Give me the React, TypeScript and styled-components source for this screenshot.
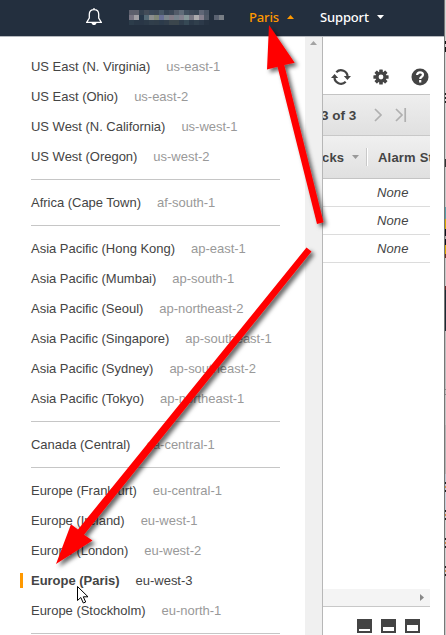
import React from 'react';
import styled, { createGlobalStyle } from 'styled-components';

const Global = createGlobalStyle`
  * { box-sizing: border-box; }
  body { margin: 0; background: #fff; font-family: "Liberation Sans", Arial, sans-serif; color: #444; overflow: hidden; }
`;

const Screen = styled.div`
  position: relative;
  display: flex;
  width: 446px;
  height: 635px;
  overflow: hidden;
`;
const Page = styled.div`
  width: 444px;
  height: 635px;
  display: flex;
  flex-direction: column;
`;
const TopBar = styled.header`
  flex: none;
  height: 37px;
  display: flex;
  align-items: flex-start;
  background: #232f3e;
  border-bottom: 1px solid #b5b9be;
  padding-left: 86px;
`;
const Bell = styled.svg`
  width: 16px;
  height: 18px;
  margin-top: 8px;
`;
const Account = styled.div`
  display: grid;
  grid-template-columns: repeat(19, 5px);
  grid-auto-rows: 5px;
  margin: 10px 0 0 27px;
`;
const Block = styled.i<{ $c: string }>`
  background: ${p => p.$c};
`;
const NavItem = styled.div<{ $active?: boolean; $w: number }>`
  display: flex;
  align-items: center;
  justify-content: space-between;
  width: ${p => p.$w}px;
  height: 34px;
  margin-left: ${p => (p.$active ? 25 : 26)}px;
  font: 500 13px "Noto Sans", sans-serif;
  letter-spacing: -0.15px;
  color: ${p => (p.$active ? '#ff9900' : '#fff')};
`;
const Caret = styled.svg`
  width: 7px;
  height: 4px;
  fill: currentColor;
`;
const Body = styled.div`
  flex: 1;
  min-height: 0;
  display: flex;
`;
const Menu = styled.nav`
  width: 323px;
  display: flex;
  border-right: 1px solid #b7b7b7;
`;
const Regions = styled.div`
  flex: 1;
  padding: 14px 25px 0 20px;
`;
const Group = styled.div`
  & + & {
    margin-top: 8px;
    padding-top: 7px;
    border-top: 1px solid transparent;
    background: linear-gradient(#c6c6c6, #c6c6c6) 11px 0 / 100% 1px no-repeat border-box;
  }
`;
const Region = styled.div<{ $on?: boolean }>`
  height: 30px;
  display: flex;
  align-items: center;
  font-size: 13px;
  line-height: 15px;
  letter-spacing: -0.02px;
  white-space: pre;
  color: #444;
  font-weight: ${p => (p.$on ? 700 : 400)};
  &::before {
    content: '';
    width: 3px;
    height: 15px;
    margin-right: 8px;
    background: ${p => (p.$on ? '#ff9900' : 'transparent')};
  }
`;
const Code = styled.span<{ $on?: boolean }>`
  margin-left: 16px;
  font-weight: 400;
  color: ${p => (p.$on ? '#444' : '#999')};
`;
const Scrollbar = styled.div`
  width: 17px;
  background: #f0f0f0;
  display: flex;
  justify-content: center;
  padding-top: 4px;
  color: #a3a3a3;
`;
const Main = styled.main`
  width: 107px;
  display: flex;
  flex-direction: column;
`;
const Icons = styled.div`
  height: 57px;
  display: flex;
  align-items: center;
  gap: 22px;
  padding: 22px 0 0 8px;
  svg { flex: none; }
`;
const Pager = styled.div`
  height: 42px;
  border-top: 1px solid #c4c4c4;
  border-bottom: 1px solid #c8c8c8;
  background: linear-gradient(#eeeeee, #e0e0e0);
  display: flex;
  align-items: center;
  font-weight: 700;
  font-size: 13.5px;
  overflow: hidden;
  span { margin-left: -2px; width: 52px; white-space: nowrap; }
`;
const HeadRow = styled.div`
  height: 43px;
  display: flex;
  align-items: center;
  overflow: hidden;
  background: linear-gradient(#f0f0f0, #e0e0e0);
  border-bottom: 1px solid #c4c4c4;
  font-weight: 700;
  font-size: 13px;
  white-space: nowrap;
  letter-spacing: 0.2px;
`;
const ColEnd = styled.div`
  flex: none;
  width: 46px;
  height: 18px;
  display: flex;
  align-items: center;
  justify-content: space-between;
  padding-right: 8px;
  margin-left: -1px;
  border-right: 1px solid #fff;
  box-shadow: inset -1px 0 #c9c9c9;
`;
const ColStart = styled.div`
  flex: none;
  padding-left: 10px;
`;
const Cell = styled.div`
  height: 28px;
  padding-left: 54px;
  line-height: 28px;
  font-size: 13px;
  font-style: italic;
  letter-spacing: 0.1px;
  border-bottom: 1px solid #dcdcdc;
`;
const HScroll = styled.div`
  margin-top: auto;
  height: 18px;
  display: flex;
  align-items: center;
  justify-content: flex-end;
  padding-right: 6px;
  background: #f4f4f4;
  border-bottom: 1px solid #c8c8c8;
`;
const Panes = styled.div`
  height: 28px;
  display: flex;
  gap: 9px;
  padding: 12px 0 0 34px;
`;
const Pane = styled.div<{ $h: number }>`
  width: 15px;
  height: 14px;
  background: #444;
  display: flex;
  align-items: flex-end;
  padding: 2px;
  &::before {
    content: '';
    width: 100%;
    height: ${p => p.$h}px;
    background: #fff;
  }
`;
const Edge = styled.div`
  width: 2px;
  display: flex;
  flex-direction: column;
  border-left: 1px solid #777;
`;
const EdgePart = styled.i<{ $h: number; $c: string }>`
  flex: none;
  height: ${p => p.$h}px;
  background: ${p => p.$c};
`;
const Overlay = styled.svg`
  position: absolute;
  inset: 0;
  width: 446px;
  height: 635px;
  pointer-events: none;
`;

const groups: [string, string][][] = [
  [['US East (N. Virginia)', 'us-east-1'], ['US East (Ohio)', 'us-east-2'], ['US West (N. California)', 'us-west-1'], ['US West (Oregon)', 'us-west-2']],
  [['Africa (Cape Town)', 'af-south-1']],
  [['Asia Pacific (Hong Kong)', 'ap-east-1'], ['Asia Pacific (Mumbai)', 'ap-south-1'], ['Asia Pacific (Seoul)', 'ap-northeast-2'], ['Asia Pacific (Singapore)', 'ap-southeast-1'], ['Asia Pacific (Sydney)', 'ap-southeast-2'], ['Asia Pacific (Tokyo)', 'ap-northeast-1']],
  [['Canada (Central)', 'ca-central-1']],
  [['Europe (Frankfurt)', 'eu-central-1'], ['Europe (Ireland)', 'eu-west-1'], ['Europe (London)', 'eu-west-2'], ['Europe (Paris)', 'eu-west-3'], ['Europe (Stockholm)', 'eu-north-1']],
  [],
];

const mosaic = [
  '#5c5f6c', '#5c5f6b', '#354250', '#434c58', '#3b4858', '#3b4655', '#465665', '#344252', '#3c4857', '#535b69', '#606c79', '#404f5e', '#3c4857', '#384554', '#5f6676', '#4b5565', '#232f3e', '#232f3e', '#232f3e',
  '#777482', '#a09fa4', '#27384a', '#536874', '#8b8d8d', '#7f8677', '#676f94', '#7a858c', '#827c87', '#77828c', '#82818e', '#849698', '#777783', '#acabad', '#85808e', '#505967', '#232f3e', '#596170', '#787e85',
  '#2c3c4a', '#293746', '#293646', '#2b3947', '#303e4b', '#303d49', '#2c3b4b', '#303d4a', '#3b464d', '#3b464c', '#303e4c', '#364955', '#2b3948', '#303f4c', '#2c3949', '#263241', '#232f3e', '#232f3e', '#232f3e',
];

const edge: [number, string][] = [
  [41, '#d4d4d4'], [3, '#111'], [3, '#d4d4d4'], [5, '#111'], [41, '#d4d4d4'], [2, '#222'], [2, '#ddd'], [2, '#222'], [2, '#ddd'], [2, '#222'],
  [56, '#d0d0d0'], [8, '#333'], [40, '#c8c8c8'], [12, '#5aa0aa'], [10, '#d8a900'], [7, '#0c0c18'], [3, '#aaa'], [6, '#0c0c18'], [9, '#d8a900'], [4, '#6b3020'],
  [28, '#c8c8c8'], [4, '#6a2528'], [41, '#1c2833'], [58, '#bdbdbd'], [1, '#888'], [4, '#bdbdbd'], [1, '#888'], [30, '#c4c4c4'], [49, '#b4b4b4'], [8, '#bfc9d6'],
  [2, '#222'], [2, '#bfc9d6'], [2, '#c98a4a'], [2, '#bfc9d6'], [2, '#222'], [18, '#c8d0dc'],
  [2, '#222'], [2, '#d0d0d0'], [2, '#c98a4a'], [2, '#d0d0d0'], [2, '#222'], [18, '#d0d0d0'],
  [2, '#222'], [2, '#d0d0d0'], [2, '#c98a4a'], [2, '#d0d0d0'], [2, '#222'], [18, '#d0d0d0'],
  [2, '#222'], [2, '#d0d0d0'], [2, '#c98a4a'], [2, '#d0d0d0'], [2, '#222'], [80, '#c8c8c8'],
];

export default function App() {
  return (
    <>
      <Global />
      <Screen>
        <Page>
          <TopBar>
            <Bell viewBox="0 0 16 18" fill="none" stroke="#fff" strokeWidth="1.3">
              <path d="M.7 14.3h14.6L12.7 10V6.2C12.7 3.3 10.9 1.6 8 1.6S3.3 3.3 3.3 6.2V10zM8 0v2" />
              <path d="M5.4 14.7c.4 1.6 1.3 2.3 2.6 2.3s2.2-.7 2.6-2.3z" fill="#fff" stroke="none" />
            </Bell>
            <Account>{mosaic.map((c, i) => <Block key={i} $c={c} />)}</Account>
            <NavItem $active $w={45}>Paris<Caret viewBox="0 0 7 4"><path d="M0 4h7L3.5 0z" /></Caret></NavItem>
            <NavItem $w={64}>Support<Caret viewBox="0 0 7 4"><path d="M0 0h7L3.5 4z" /></Caret></NavItem>
          </TopBar>
          <Body>
            <Menu>
              <Regions>
                {groups.map((g, i) => (
                  <Group key={i}>
                    {g.map(([name, code]) => {
                      const on = code === 'eu-west-3';
                      return <Region key={code} $on={on}>{name}<Code $on={on}>{code}</Code></Region>;
                    })}
                  </Group>
                ))}
              </Regions>
              <Scrollbar><Caret viewBox="0 0 7 4"><path d="M0 4h7L3.5 0z" /></Caret></Scrollbar>
            </Menu>
            <Main>
              <Icons>
                <svg width="20" height="18" viewBox="0 0 20 18" fill="none" stroke="#444" strokeWidth="2.2">
                  <path d="M5.3 4.2A6.5 6.5 0 0 1 16.5 9M14.7 13.7A6.5 6.5 0 0 1 3.5 9" />
                  <path d="M12.8 8h7.2l-3.6 4zM0 10h7.2L3.6 6z" fill="#444" stroke="none" />
                </svg>
                <svg width="16" height="16" viewBox="-8 -8 16 16">
                  <g fill="#444">
                    {[0, 45, 90, 135].map(a => <rect key={a} x="-1.8" y="-7.6" width="3.6" height="15.2" rx=".6" transform={`rotate(${a})`} />)}
                    <circle r="5.5" />
                  </g>
                  <circle r="2.4" fill="#fff" />
                </svg>
                <svg width="18" height="18" viewBox="0 0 18 18">
                  <circle cx="9" cy="9" r="8.5" fill="#444" />
                  <path d="M6.1 7.1C6.1 5.3 7.3 4.4 9 4.4s3 .9 3 2.4c0 2-2.8 1.9-2.8 4.1M9.2 12.1v2.3" fill="none" stroke="#fff" strokeWidth="2.2" />
                </svg>
              </Icons>
              <Pager>
                <span>3 of 3</span>
                <svg width="34" height="14" viewBox="0 0 34 14" fill="none" stroke="#b0b0b0" strokeWidth="1.7">
                  <path d="M2 1l6 6-6 6M23 1l6 6-6 6M32.2 0v14" />
                </svg>
              </Pager>
              <HeadRow>
                <ColEnd>cks<Caret viewBox="0 0 7 4" color="#999"><path d="M0 0h7L3.5 4z" /></Caret></ColEnd>
                <ColStart>Alarm Status</ColStart>
              </HeadRow>
              <Cell>None</Cell>
              <Cell>None</Cell>
              <Cell>None</Cell>
              <HScroll><svg width="4" height="7" viewBox="0 0 4 7"><path d="M0 0v7l4-3.5z" fill="#888" /></svg></HScroll>
              <Panes><Pane $h={2} /><Pane $h={4} /><Pane $h={6} /></Panes>
            </Main>
          </Body>
        </Page>
        <Edge>{edge.map(([h, c], i) => <EdgePart key={i} $h={h} $c={c} />)}</Edge>
        <Overlay viewBox="0 0 446 635">
          <defs>
            <filter id="shadow" x="-20%" y="-20%" width="140%" height="140%">
              <feDropShadow dx="3" dy="3" stdDeviation="2" floodColor="#000" floodOpacity=".6" />
            </filter>
          </defs>
          <g fill="#f00" filter="url(#shadow)">
            <path d="M269 25L294.7 62.7 284.3 65 323.5 222.3 317 224 277.5 66.8 267 69.5z" />
            <path d="M56 564L71 524.3 78 529.5 306.5 247.5 311.5 251.5 84 534.7 92.5 540.5z" />
          </g>
          <path d="M77.5 586.5v14l3.3-3 2.5 5.5 2.4-1-2.4-5.2h4.7z" fill="#fff" stroke="#000" />
        </Overlay>
      </Screen>
    </>
  );
}
